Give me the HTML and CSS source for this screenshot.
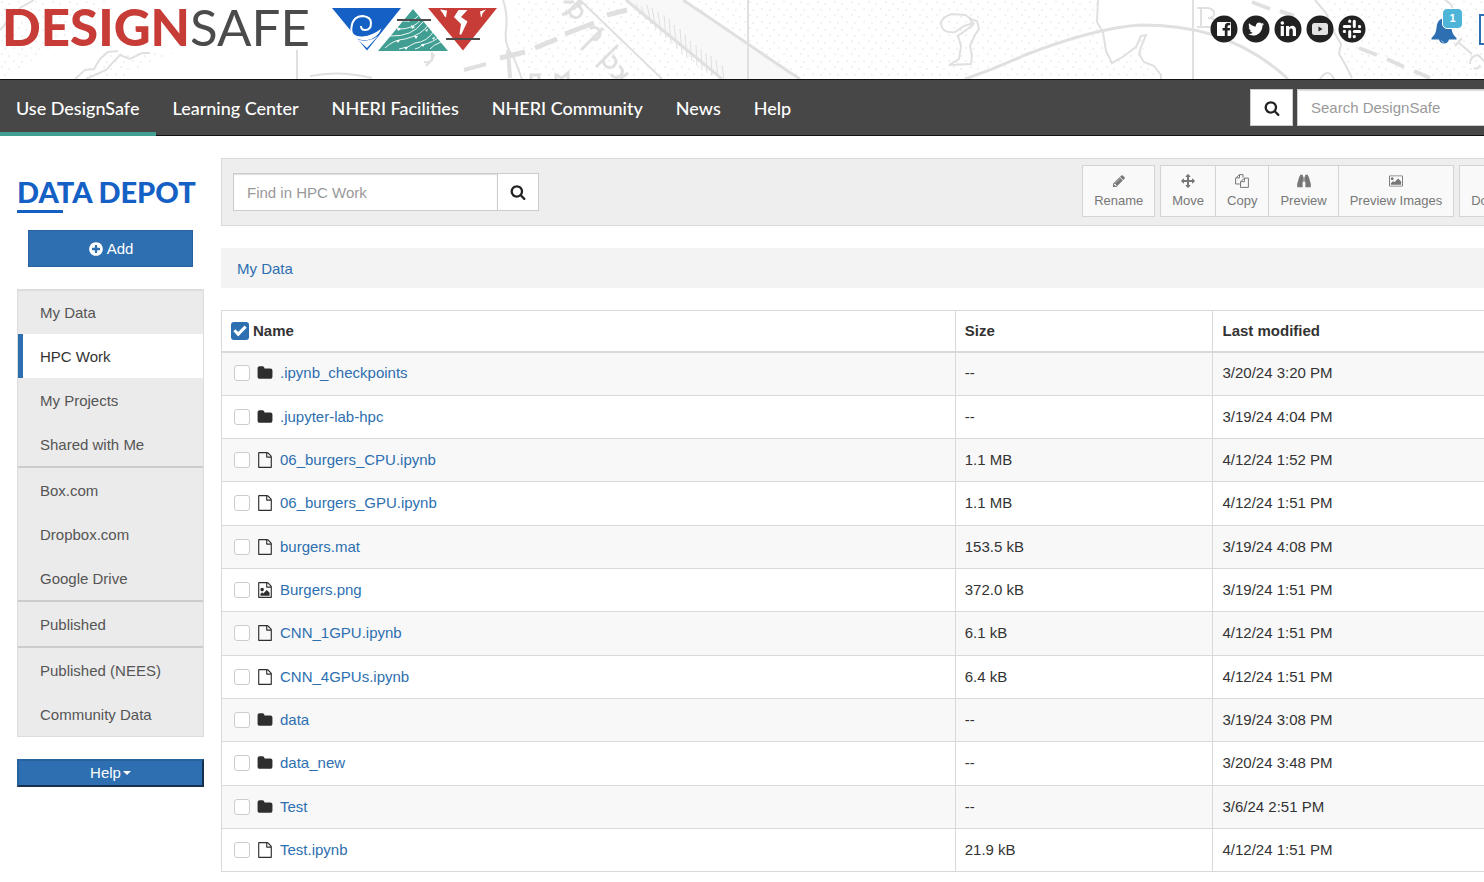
FILE: index.html
```html
<!DOCTYPE html>
<html lang="en">
<head>
<meta charset="utf-8">
<title>DesignSafe | Data Depot</title>
<link rel="stylesheet" href="styles.css">
</head>
<body>
<svg class="sprite" aria-hidden="true">
  <symbol id="i-search" viewBox="0 0 1792 1792"><path d="M1216 832q0-185-131.500-316.500t-316.500-131.500-316.500 131.500-131.500 316.500 131.500 316.500 316.500 131.500 316.500-131.500 131.500-316.500zm512 832q0 52-38 90t-90 38q-54 0-90-38l-343-342q-179 124-399 124-143 0-273.500-55.500t-225-150-150-225-55.500-273.500 55.500-273.500 150-225 225-150 273.500-55.500 273.500 55.500 225 150 150 225 55.500 273.500q0 220-124 399l343 343q37 37 37 90z"/></symbol>
  <symbol id="i-plus" viewBox="0 0 1792 1792"><path d="M1344 960v-128q0-26-19-45t-45-19h-256v-256q0-26-19-45t-45-19h-128q-26 0-45 19t-19 45v256h-256q-26 0-45 19t-19 45v128q0 26 19 45t45 19h256v256q0 26 19 45t45 19h128q26 0 45-19t19-45v-256h256q26 0 45-19t19-45zm320-64q0 209-103 385.500t-279.500 279.500-385.500 103-385.500-103-279.500-279.500-103-385.500 103-385.500 279.500-279.500 385.500-103 385.500 103 279.500 279.500 103 385.500z"/></symbol>
  <symbol id="i-pencil" viewBox="0 0 1792 1792"><path d="M491 1536l91-91-235-235-91 91v107h128v128h107zm523-928q0-22-22-22-10 0-17 7l-542 542q-7 7-7 17 0 22 22 22 10 0 17-7l542-542q7-7 7-17zm-54-192l416 416-832 832h-416v-416zm683 96q0 53-37 90l-166 166-416-416 166-165q36-38 90-38 53 0 91 38l235 234q37 39 37 91z"/></symbol>
  <symbol id="i-arrows" viewBox="0 0 1792 1792"><path d="M1792 896q0 26-19 45l-256 256q-19 19-45 19t-45-19-19-45v-128h-384v384h128q26 0 45 19t19 45-19 45l-256 256q-19 19-45 19t-45-19l-256-256q-19-19-19-45t19-45 45-19h128v-384h-384v128q0 26-19 45t-45 19-45-19l-256-256q-19-19-19-45t19-45l256-256q19-19 45-19t45 19 19 45v128h384v-384h-128q-26 0-45-19t-19-45 19-45l256-256q19-19 45-19t45 19l256 256q19 19 19 45t-19 45-45 19h-128v384h384v-128q0-26 19-45t45-19 45 19l256 256q19 19 19 45z"/></symbol>
  <symbol id="i-copy" viewBox="0 0 14 14"><path d="M4.500.6H8v3M4.500.6v3.300H.6M4.500.6.6 4.200V10h4.200M9.400 4.100h4v9.300H5.500V7.700L9.400 4.100v3.600H5.500" fill="none" stroke="currentColor" stroke-linejoin="round"/></symbol>
  <symbol id="i-binoculars" viewBox="0 0 14 14"><path d="M3 .8h2.800v1.400h.4v5.600h-.6v5.400H.6q-.5 0-.4-.6V10L2 3.500h.3V2.200H3zM11 .8H8.200v1.400h-.4v5.600h.6v5.400h5q.5 0 .4-.6V10L12 3.500h-.3V2.200H11zM6.500 3.300h1v4.500h-1z"/></symbol>
  <symbol id="i-image" viewBox="-64 0 1920 1792"><path d="M576 576q0 80-56 136t-136 56-136-56-56-136 56-136 136-56 136 56 56 136zm1024 384v448h-1408v-192l320-320 160 160 512-512zm96-704h-1600q-13 0-22.500 9.500t-9.500 22.500v1216q0 13 9.500 22.500t22.500 9.500h1600q13 0 22.500-9.500t9.500-22.500v-1216q0-13-9.500-22.500t-22.500-9.500zm160 32v1216q0 66-47 113t-113 47h-1600q-66 0-113-47t-47-113v-1216q0-66 47-113t113-47h1600q66 0 113 47t47 113z"/></symbol>
  <symbol id="i-download" viewBox="0 0 14 14"><path d="M5.500 1h3v5H12L7 11 2 6h3.500zM1 10v3h12v-3z"/></symbol>
  <symbol id="i-folder" viewBox="0 0 1792 1792"><path d="M1728 608v704q0 92-66 158t-158 66h-1216q-92 0-158-66t-66-158v-960q0-92 66-158t158-66h320q92 0 158 66t66 158v32h672q92 0 158 66t66 158z"/></symbol>
  <symbol id="i-file" viewBox="0 0 1792 1792"><path d="M1596 380q28 28 48 76t20 88v1152q0 40-28 68t-68 28h-1344q-40 0-68-28t-28-68v-1600q0-40 28-68t68-28h896q40 0 88 20t76 48zm-444-244v376h376q-10-29-22-41l-313-313q-12-12-41-22zm384 1528v-1024h-416q-40 0-68-28t-28-68v-416h-768v1536h1280z"/></symbol>
  <symbol id="i-fileimg" viewBox="0 0 1792 1792"><path d="M1596 380q28 28 48 76t20 88v1152q0 40-28 68t-68 28h-1344q-40 0-68-28t-28-68v-1600q0-40 28-68t68-28h896q40 0 88 20t76 48zm-444-244v376h376q-10-29-22-41l-313-313q-12-12-41-22zm384 1528v-1024h-416q-40 0-68-28t-28-68v-416h-768v1536h1280zm-128-448v320h-1024v-192l192-192 128 128 384-384zm-832-192q-80 0-136-56t-56-136 56-136 136-56 136 56 56 136-56 136-136 56z"/></symbol>
</svg>

<div class="page">
  <header class="banner">
    <svg class="map" viewBox="0 0 1544 79" preserveAspectRatio="xMinYMin slice" aria-hidden="true">
      <defs>
        <pattern id="dots" width="17" height="13" patternUnits="userSpaceOnUse"><g fill="#eee"><circle cx="2" cy="2" r="1"/><circle cx="9" cy="4" r="1"/><circle cx="14" cy="9" r="1"/><circle cx="5" cy="10" r="1"/></g></pattern>
      </defs>
      <g fill="url(#dots)">
        <path d="M0 0h110L60 45 0 79zM105 50L180 50 120 79H85zM515 0H1098V30L960 79H515zM1000 68L1100 32 1112 62 1146 35 1143 55 1162 79H1000zM1320 0H1544V79H1350z"/>
      </g>
      <path d="M626 0L722 79H800L748 42 683 0z" fill="#f8f8f8"/>
      <g fill="none" stroke="#e0e0e0" stroke-width="2">
        <path d="M0 30L20 8 34 0M75 79l10-9 9-1 6-10 8-7 10-1M86 79l20-9 14-15 10 4 12-6h8M297 50V79M426 66l6-6v-8M434 54q-2 10-10 8"/>
        <path d="M503 0q5 14 3 30t8 28l8 21M580 0l82 79M748 0V79"/>
        <path d="M626 0l96 79M683 0q30 20 65 44t52 35" stroke-width="3"/>
        <path d="M636 4l4 11M641 6l5 14M647 5l4 19M652 8l4 21M658 12l3 22M664 15l2 23M669 19l2 24M674 25l3 23M680 29l2 24M685 34l2 24M690 41l2 20M696 45l1 21M701 49l1 21M706 53l1 20M711 56l1 20M716 60l2 16M722 65l2 14" stroke-width="1"/>
        <path d="M973 20l-8-5-13-1q-10 3-11 9 1 11 14 9l9-6 10-3M973 25l-15 11 3 10-2 13-10 6 22-1 1-9-2-9 5-11 4-6-2-8-7-2z"/>
        <path d="M1098 0l-1 22 6 10 3 19 6 12 12-7 12-9 5-11 5-1-5 12-2 7 5 8 10 4 7 9v7M1193 0V79M1315 0l11 13 8 19 7 12-2 10 6 10 7 14M1320 79q8-12 14 0"/>
        <path d="M965 79q30-10 60-24 70-27 115-30 40 0 70 9 45 14 78 45" stroke-width="3"/>
        <path d="M562 15l20-12M564 2h10M565 15l16-16M570 10a6 6 0 108-4M581 50l22-22M592 39a6 6 0 10-2-10M596 67l22-22M604 60a6 6 0 108-4M611 74a6 6 0 108-8M620 79l8-6M531 79v-4h8v4M556 79v-4l6 3 6-5v6" stroke-width="3"/>
        <path d="M500 58l25-6M535 48l22-9M565 34l29-11M607 15l20-5" stroke-width="5"/>
        <path d="M464 70l22-6M508 50l2 28" stroke-width="4"/>
        <path d="M1252 2l18 7M1359 48l18 7M1387 59l17 8M1414 71l16 7M1280 11l14 5" stroke-width="4"/>
        <path d="M310 76q30-6 62 2M1445 0q12 7 4 12l14 10"/>
        <path d="M1197 8h11q7 1 6 7-1 3-6 3 8 0 8 5 0 4-7 4h-12M1201 8v19M1223 18q7-4 8 2v7M1231 22q-9 0-9 4 4 3 9-1M1458 42l14 12M1455 46l7-8M1470 64q0-8 8-9l6 6M1474 68q4 2 6-3" stroke-width="2"/>
      </g>
    </svg>
    <a class="brand" href="#" aria-label="DesignSafe home">
      <span class="wordmark"><b>DESIGN</b><span>SAFE</span></span>
      <svg class="brand-mark" width="166" height="44" viewBox="0 0 166 44" aria-hidden="true">
        <path d="M0 1h69L35 43.500z" fill="#1460c4"/>
        <path d="M24 31Q18 27 19.500 20 21 9 31 9q8 1 8 7 0 7-6 7-4 0-4-4" fill="none" stroke="#fff" stroke-width="2"/>
        <path d="M18.500 21q1 9 12 8.500 10-1 19-8-4 10-14 11.500-11 1-15-5z" fill="#fff"/>
        <path d="M25 32q6 3 12 1 5-1 9-4L35 41z" fill="#fff"/>
        <path d="M81 2l35 42H46z" fill="#419e92"/>
        <path d="M71 14q10 1 15-5M65 22q17 1 25-11M58 29q22 1 33-14M53 41q8-8 20-9 17-4 24-15M67 42q9-1 16-6 12-1 19-12M83 42q5-1 7-4 12-3 17-8M98 42q3-4 11-7" fill="none" stroke="#fff" stroke-width="0.900"/>
        <path d="M75 12l4 1-3 2zM65 20l4 2-3 2zM79 18l4 2-3 2zM64 33l4 0-2 3zM82 29l4 0-2 3zM93 23l3-1-1 3zM72 40l4 0-2 3zM89 37l4 0-2 3zM100 31l3-1-1 3z" fill="#fff"/>
        <path d="M96 1h69L131 43.500z" fill="#c73c36"/>
        <path d="M126.500 3h9l-6.500 7 6.500 4.500L129 28l-1.500-1 1.500-10-7-7zM108 2.500l7 1-1 7q-2-1-3-4zM154 2.500l-6 2 1 6q1-1 1.500-4z" fill="#fff"/>
        <path d="M65 13h34M114 32h34" stroke="#4b4b4b" stroke-width="2"/>
      </svg>
    </a>
    <nav class="social" aria-label="Social media">
      <a href="#" aria-label="Facebook"><svg viewBox="0 0 28 28"><circle cx="14" cy="14" r="13.500"/><path fill="#fff" d="M8 7h12a1 1 0 011 1v12a1 1 0 01-1 1h-2.500v-5.500h2.200l.4-2.500h-2.600v-1.500q0-1.200 1.400-1.200h1.300V8q-5.400-.8-5.400 3.400V13h-2.200v2.500h2.200V21H8a1 1 0 01-1-1V8a1 1 0 011-1z"/></svg></a>
      <a href="#" aria-label="Twitter"><svg viewBox="0 0 28 28"><circle cx="14" cy="14" r="13.500"/><path fill="#fff" transform="translate(5 5) scale(.0101)" d="M1684 408q-67 98-162 167 1 14 1 42 0 130-38 259.500t-115.500 248.500-184.500 210.500-258 146-323 54.500q-271 0-496-145 35 4 78 4 225 0 401-138-105-2-188-64.500t-114-159.500q33 5 61 5 43 0 85-11-112-23-185.500-111.500t-73.500-205.500v-4q68 38 146 41-66-44-105-115t-39-154q0-88 44-163 121 149 294.500 238.500t371.500 99.500q-8-38-8-74 0-134 94.500-228.500t228.500-94.500q140 0 236 102 109-21 205-78-37 115-142 178 93-10 186-50z"/></svg></a>
      <a href="#" aria-label="LinkedIn"><svg viewBox="0 0 28 28"><circle cx="14" cy="14" r="13.500"/><circle cx="8.300" cy="8" r="1.800" fill="#fff"/><path fill="#fff" d="M6.700 11h3.200v10H6.700zM12 11h3v1.400q1-1.700 3.200-1.700 3.800 0 3.800 4.500V21h-3.200v-5.200q0-2.500-1.700-2.500-1.900 0-1.900 2.500V21H12z"/></svg></a>
      <a href="#" aria-label="YouTube"><svg viewBox="0 0 28 28"><circle cx="14" cy="14" r="13.500"/><rect x="6" y="8" width="16" height="12" rx="2.500" fill="#e2e2e2"/><path d="M12.500 11.500v5l4-2.500z"/></svg></a>
      <a href="#" aria-label="Slack"><svg viewBox="0 0 28 28"><circle cx="14" cy="14" r="13.500"/><path d="M11.700 6v.1M11.700 11.400H6.300M16.300 6.300v5.100M21.700 11.700v-.1M6.300 16.400v-.1M11.700 16.500v5.200M16.300 16.400h5.400M16.300 21.700v.1" fill="none" stroke="#fff" stroke-width="3" stroke-linecap="round"/><path d="M11.700 6.500v1M20.500 11.400h1M6.500 16.400h1M16.300 20.500v1" stroke="#fff" stroke-width="3"/></svg></a>
    </nav>
    <button class="bell" type="button" aria-label="Notifications">
      <svg width="26" height="27" viewBox="0 0 26 27" aria-hidden="true"><path d="M13 1c5 1 7 4 7.500 10 .4 4 1.500 7 5 10v1.500H18q-1 4-5 4-4 0-5-4H.5V21c3.500-3 4.500-6 5-10C6 5 8 2 13 1z"/><path d="M10.500 23.500q.5 1.800 2.500 1.800" fill="none" stroke="#fff" stroke-width=".6"/></svg>
      <span class="badge">1</span>
    </button>
    <a class="login" href="#">Log in</a>
  </header>

  <nav class="mainnav">
    <a class="active" href="#">Use DesignSafe</a><a href="#">Learning Center</a><a href="#">NHERI Facilities</a><a href="#">NHERI Community</a><a href="#">News</a><a href="#">Help</a>
    <form class="site-search">
      <button type="button" aria-label="Search"><svg class="icon"><use href="#i-search"/></svg></button>
      <input type="text" placeholder="Search DesignSafe" aria-label="Search DesignSafe">
    </form>
  </nav>

  <div class="layout">
    <aside class="sidebar">
      <h1>DATA DEPOT</h1>
      <button class="add" type="button"><svg class="icon"><use href="#i-plus"/></svg>Add</button>
      <nav class="sources">
        <a href="#">My Data</a>
        <a class="current" href="#">HPC Work</a>
        <a href="#">My Projects</a>
        <a href="#">Shared with Me</a>
        <a class="split" href="#">Box.com</a>
        <a href="#">Dropbox.com</a>
        <a href="#">Google Drive</a>
        <a class="split" href="#">Published</a>
        <a class="split" href="#">Published (NEES)</a>
        <a href="#">Community Data</a>
      </nav>
      <button class="help" type="button">Help<span class="caret"></span></button>
    </aside>

    <main class="content">
      <div class="toolbar">
        <form class="find">
          <input type="text" placeholder="Find in HPC Work" aria-label="Find in HPC Work">
          <button type="button" aria-label="Find"><svg class="icon"><use href="#i-search"/></svg></button>
        </form>
        <div class="actions">
          <div class="group"><button type="button"><svg class="icon"><use href="#i-pencil"/></svg>Rename</button></div>
          <div class="group">
            <button type="button"><svg class="icon"><use href="#i-arrows"/></svg>Move</button>
            <button type="button"><svg class="icon"><use href="#i-copy"/></svg>Copy</button>
            <button type="button"><svg class="icon"><use href="#i-binoculars"/></svg>Preview</button>
            <button type="button"><svg class="icon"><use href="#i-image"/></svg>Preview Images</button>
          </div>
          <div class="group"><button type="button"><svg class="icon"><use href="#i-download"/></svg>Download</button></div>
        </div>
      </div>
      <nav class="crumbs" aria-label="Breadcrumb"><a href="#">My Data</a></nav>
      <table class="files">
        <colgroup><col class="c-name"><col class="c-size"><col></colgroup>
        <thead><tr><th><label class="all"><input type="checkbox" checked>Name</label></th><th>Size</th><th>Last modified</th></tr></thead>
        <tbody>
          <tr><td><div class="file"><input type="checkbox" aria-label="Select .ipynb_checkpoints"><svg class="icon"><use href="#i-folder"/></svg><a href="#">.ipynb_checkpoints</a></div></td><td>--</td><td>3/20/24 3:20 PM</td></tr>
          <tr><td><div class="file"><input type="checkbox" aria-label="Select .jupyter-lab-hpc"><svg class="icon"><use href="#i-folder"/></svg><a href="#">.jupyter-lab-hpc</a></div></td><td>--</td><td>3/19/24 4:04 PM</td></tr>
          <tr><td><div class="file"><input type="checkbox" aria-label="Select 06_burgers_CPU.ipynb"><svg class="icon"><use href="#i-file"/></svg><a href="#">06_burgers_CPU.ipynb</a></div></td><td>1.1 MB</td><td>4/12/24 1:52 PM</td></tr>
          <tr><td><div class="file"><input type="checkbox" aria-label="Select 06_burgers_GPU.ipynb"><svg class="icon"><use href="#i-file"/></svg><a href="#">06_burgers_GPU.ipynb</a></div></td><td>1.1 MB</td><td>4/12/24 1:51 PM</td></tr>
          <tr><td><div class="file"><input type="checkbox" aria-label="Select burgers.mat"><svg class="icon"><use href="#i-file"/></svg><a href="#">burgers.mat</a></div></td><td>153.5 kB</td><td>3/19/24 4:08 PM</td></tr>
          <tr><td><div class="file"><input type="checkbox" aria-label="Select Burgers.png"><svg class="icon"><use href="#i-fileimg"/></svg><a href="#">Burgers.png</a></div></td><td>372.0 kB</td><td>3/19/24 1:51 PM</td></tr>
          <tr><td><div class="file"><input type="checkbox" aria-label="Select CNN_1GPU.ipynb"><svg class="icon"><use href="#i-file"/></svg><a href="#">CNN_1GPU.ipynb</a></div></td><td>6.1 kB</td><td>4/12/24 1:51 PM</td></tr>
          <tr><td><div class="file"><input type="checkbox" aria-label="Select CNN_4GPUs.ipynb"><svg class="icon"><use href="#i-file"/></svg><a href="#">CNN_4GPUs.ipynb</a></div></td><td>6.4 kB</td><td>4/12/24 1:51 PM</td></tr>
          <tr><td><div class="file"><input type="checkbox" aria-label="Select data"><svg class="icon"><use href="#i-folder"/></svg><a href="#">data</a></div></td><td>--</td><td>3/19/24 3:08 PM</td></tr>
          <tr><td><div class="file"><input type="checkbox" aria-label="Select data_new"><svg class="icon"><use href="#i-folder"/></svg><a href="#">data_new</a></div></td><td>--</td><td>3/20/24 3:48 PM</td></tr>
          <tr><td><div class="file"><input type="checkbox" aria-label="Select Test"><svg class="icon"><use href="#i-folder"/></svg><a href="#">Test</a></div></td><td>--</td><td>3/6/24 2:51 PM</td></tr>
          <tr><td><div class="file"><input type="checkbox" aria-label="Select Test.ipynb"><svg class="icon"><use href="#i-file"/></svg><a href="#">Test.ipynb</a></div></td><td>21.9 kB</td><td>4/12/24 1:51 PM</td></tr>
        </tbody>
      </table>
    </main>
  </div>
</div>
</body>
</html>
```
FILE: styles.css
```css
* { box-sizing: border-box; }
html { overflow-x: hidden; }
body {
  margin: 0;
  overflow-x: hidden;
  background: #fff;
  color: #333;
  font: 15px/22px "Liberation Sans", Arial, sans-serif;
}
a { color: #2d6fb0; text-decoration: none; }
button, input { font: inherit; margin: 0; border-radius: 0; }
.sprite { display: none; }
.icon { width: 16px; height: 16px; fill: currentColor; flex: none; }

/* The page is a little wider than the window. */
.page { width: calc(100% + 60px); }

/* Banner */
.banner {
  position: relative;
  display: flex;
  height: 79px;
  padding: 0 6px 0 2px;
}
.map { position: absolute; inset: 0; width: 100%; height: 100%; }
.brand { position: relative; display: flex; align-items: flex-start; gap: 22px; padding-top: 7px; }
.wordmark { display: flex; font: 51px/40px Lato, sans-serif; color: #4b4b4b; }
.wordmark b { font-weight: 900; color: #c73c36; }
.brand-mark { flex: none; }
.social { position: relative; display: flex; gap: 4px; margin-left: auto; padding-top: 15px; }
.social svg { display: block; width: 28px; height: 28px; fill: #222; }
.bell {
  position: relative;
  align-self: flex-start;
  margin: 15px 0 0 65px;
  padding: 2px 0 0;
  border: 0;
  background: none;
}
.bell svg { display: block; fill: #2d6fb0; }
.badge {
  position: absolute;
  top: -7px;
  right: -6px;
  width: 21px;
  height: 21px;
  border: 1px solid #fff;
  border-radius: 5px;
  background: #4fb5d8;
  color: #fff;
  font-weight: bold;
  font-size: 11px;
  line-height: 19px;
  text-align: center;
}
.login {
  position: relative;
  align-self: flex-start;
  width: 59px;
  height: 31px;
  margin: 14px 0 0 22px;
  border: 2px solid #2d6fb0;
  background: #fff;
  line-height: 27px;
  text-align: center;
}

/* Main navigation */
.mainnav {
  position: relative;
  display: flex;
  height: 57px;
  border-top: 1px solid #111;
  background: #474747;
  box-shadow: inset 0 -1px #111;
}
.mainnav > a {
  padding: 0 17px 0 16px;
  border-bottom: 4px solid transparent;
  color: #fff;
  font: 500 18px/56px Lato, sans-serif;
}
.mainnav > a.active { border-bottom-color: #419e92; }
.site-search { display: flex; gap: 4px; margin-left: auto; padding-top: 9px; }
.site-search button {
  display: grid;
  place-items: center;
  width: 43px;
  height: 37px;
  border: 1px solid #ccc;
  background: #fff;
  color: #222;
}
.site-search input {
  width: 247px;
  height: 37px;
  padding: 0 13px;
  border: 1px solid #ccc;
  box-shadow: inset 0 1px 1px #ddd;
}
input::placeholder { color: #999; opacity: 1; }

/* Page body */
.layout { display: flex; gap: 17px; padding: 22px 0 0 17px; }
.sidebar { flex: none; width: 187px; }
.sidebar h1 {
  margin: 16px 0 0;
  padding-bottom: 4px;
  color: #1460c4;
  font: 900 29px/36px Lato, sans-serif;
  white-space: nowrap;
}
.sidebar h1::after { content: ""; display: block; width: 46px; height: 3px; background: #1460c4; }
.add {
  display: flex;
  align-items: center;
  justify-content: center;
  gap: 3px;
  width: 165px;
  height: 37px;
  margin: 13px 11px 22px;
  border: 1px solid #2860a0;
  background: #2d6fb0;
  color: #fff;
}
.sources { border: 1px solid #ddd; background: #ebebeb; box-shadow: inset 0 1px 1px #ddd; }
.sources a { display: block; padding: 12px 22px 10px; color: #555; }
.sources .current { padding-left: 17px; border-left: 5px solid #2d6fb0; background: #fff; color: #333; }
.sources .split { border-top: 2px solid #ccc; }
.help {
  display: flex;
  align-items: center;
  justify-content: center;
  gap: 2px;
  width: 100%;
  height: 28px;
  margin-top: 22px;
  border: 2px solid;
  border-color: #28629c #17304c #17304c #28629c;
  background: #2d6fb0;
  color: #fff;
}
.caret { border: 4px solid transparent; border-top-color: #fff; border-bottom: 0; }

.content { flex: 1; min-width: 0; }
.toolbar {
  display: flex;
  justify-content: space-between;
  height: 68px;
  padding: 6px 2px 0 11px;
  border: 1px solid #d9d9d9;
  background: #eee;
}
.find { display: flex; padding-top: 8px; }
.find input {
  width: 265px;
  height: 38px;
  padding: 0 13px;
  border: 1px solid #ccc;
  background: #fff;
  box-shadow: inset 0 1px 1px #ddd;
}
.find button {
  display: grid;
  place-items: center;
  width: 41px;
  height: 38px;
  border: 1px solid #ccc;
  border-left: 0;
  background: #fff;
  color: #222;
}
.actions { display: flex; gap: 5px; }
.group { display: flex; }
.group button {
  display: flex;
  flex-direction: column;
  align-items: center;
  height: 52px;
  padding: 7px 11px 0;
  border: 1px solid #d4d4d4;
  background: #f9f9f9;
  color: #777;
  font-size: 13px;
  line-height: 18px;
  white-space: nowrap;
}
.group button + button { border-left: 0; }
.group .icon { width: 14px; height: 14px; margin: 1px 0 4px; }
.crumbs { margin: 22px 0; padding: 10px 16px 8px; background: #f3f3f3; }

.files { width: 100%; border-collapse: collapse; table-layout: fixed; }
.c-name { width: 55.5%; }
.c-size { width: 19.5%; }
.files th, .files td { padding: 0 9px; border: 1px solid #d9d9d9; text-align: left; }
.files th { height: 41px; border-bottom-width: 2px; }
.files td { height: 43px; padding-bottom: 1px; }
.files tbody tr:nth-child(3n + 1) td { height: 44px; }
.files tbody tr:nth-child(odd) { background: #f8f8f8; }
.all, .file { display: flex; align-items: center; }
.all { gap: 4px; }
.file a { margin-left: 7px; }
.file .icon { margin-left: 7px; color: #2e2e2e; }
.files input {
  appearance: none;
  width: 16px;
  height: 16px;
  margin-left: 3px;
  border: 1px solid #ccc;
  border-radius: 3px;
  background: #fff;
}
.files .all input {
  display: grid;
  justify-items: center;
  align-items: start;
  width: 18px;
  height: 18px;
  margin-left: 0;
  padding-top: 4px;
  border: 0;
  background: #2d6fb0;
}
.all input::before {
  content: "";
  box-sizing: border-box;
  width: 12px;
  height: 7px;
  border: solid #fff;
  border-width: 0 0 3px 3px;
  transform: rotate(-45deg);
}
```
